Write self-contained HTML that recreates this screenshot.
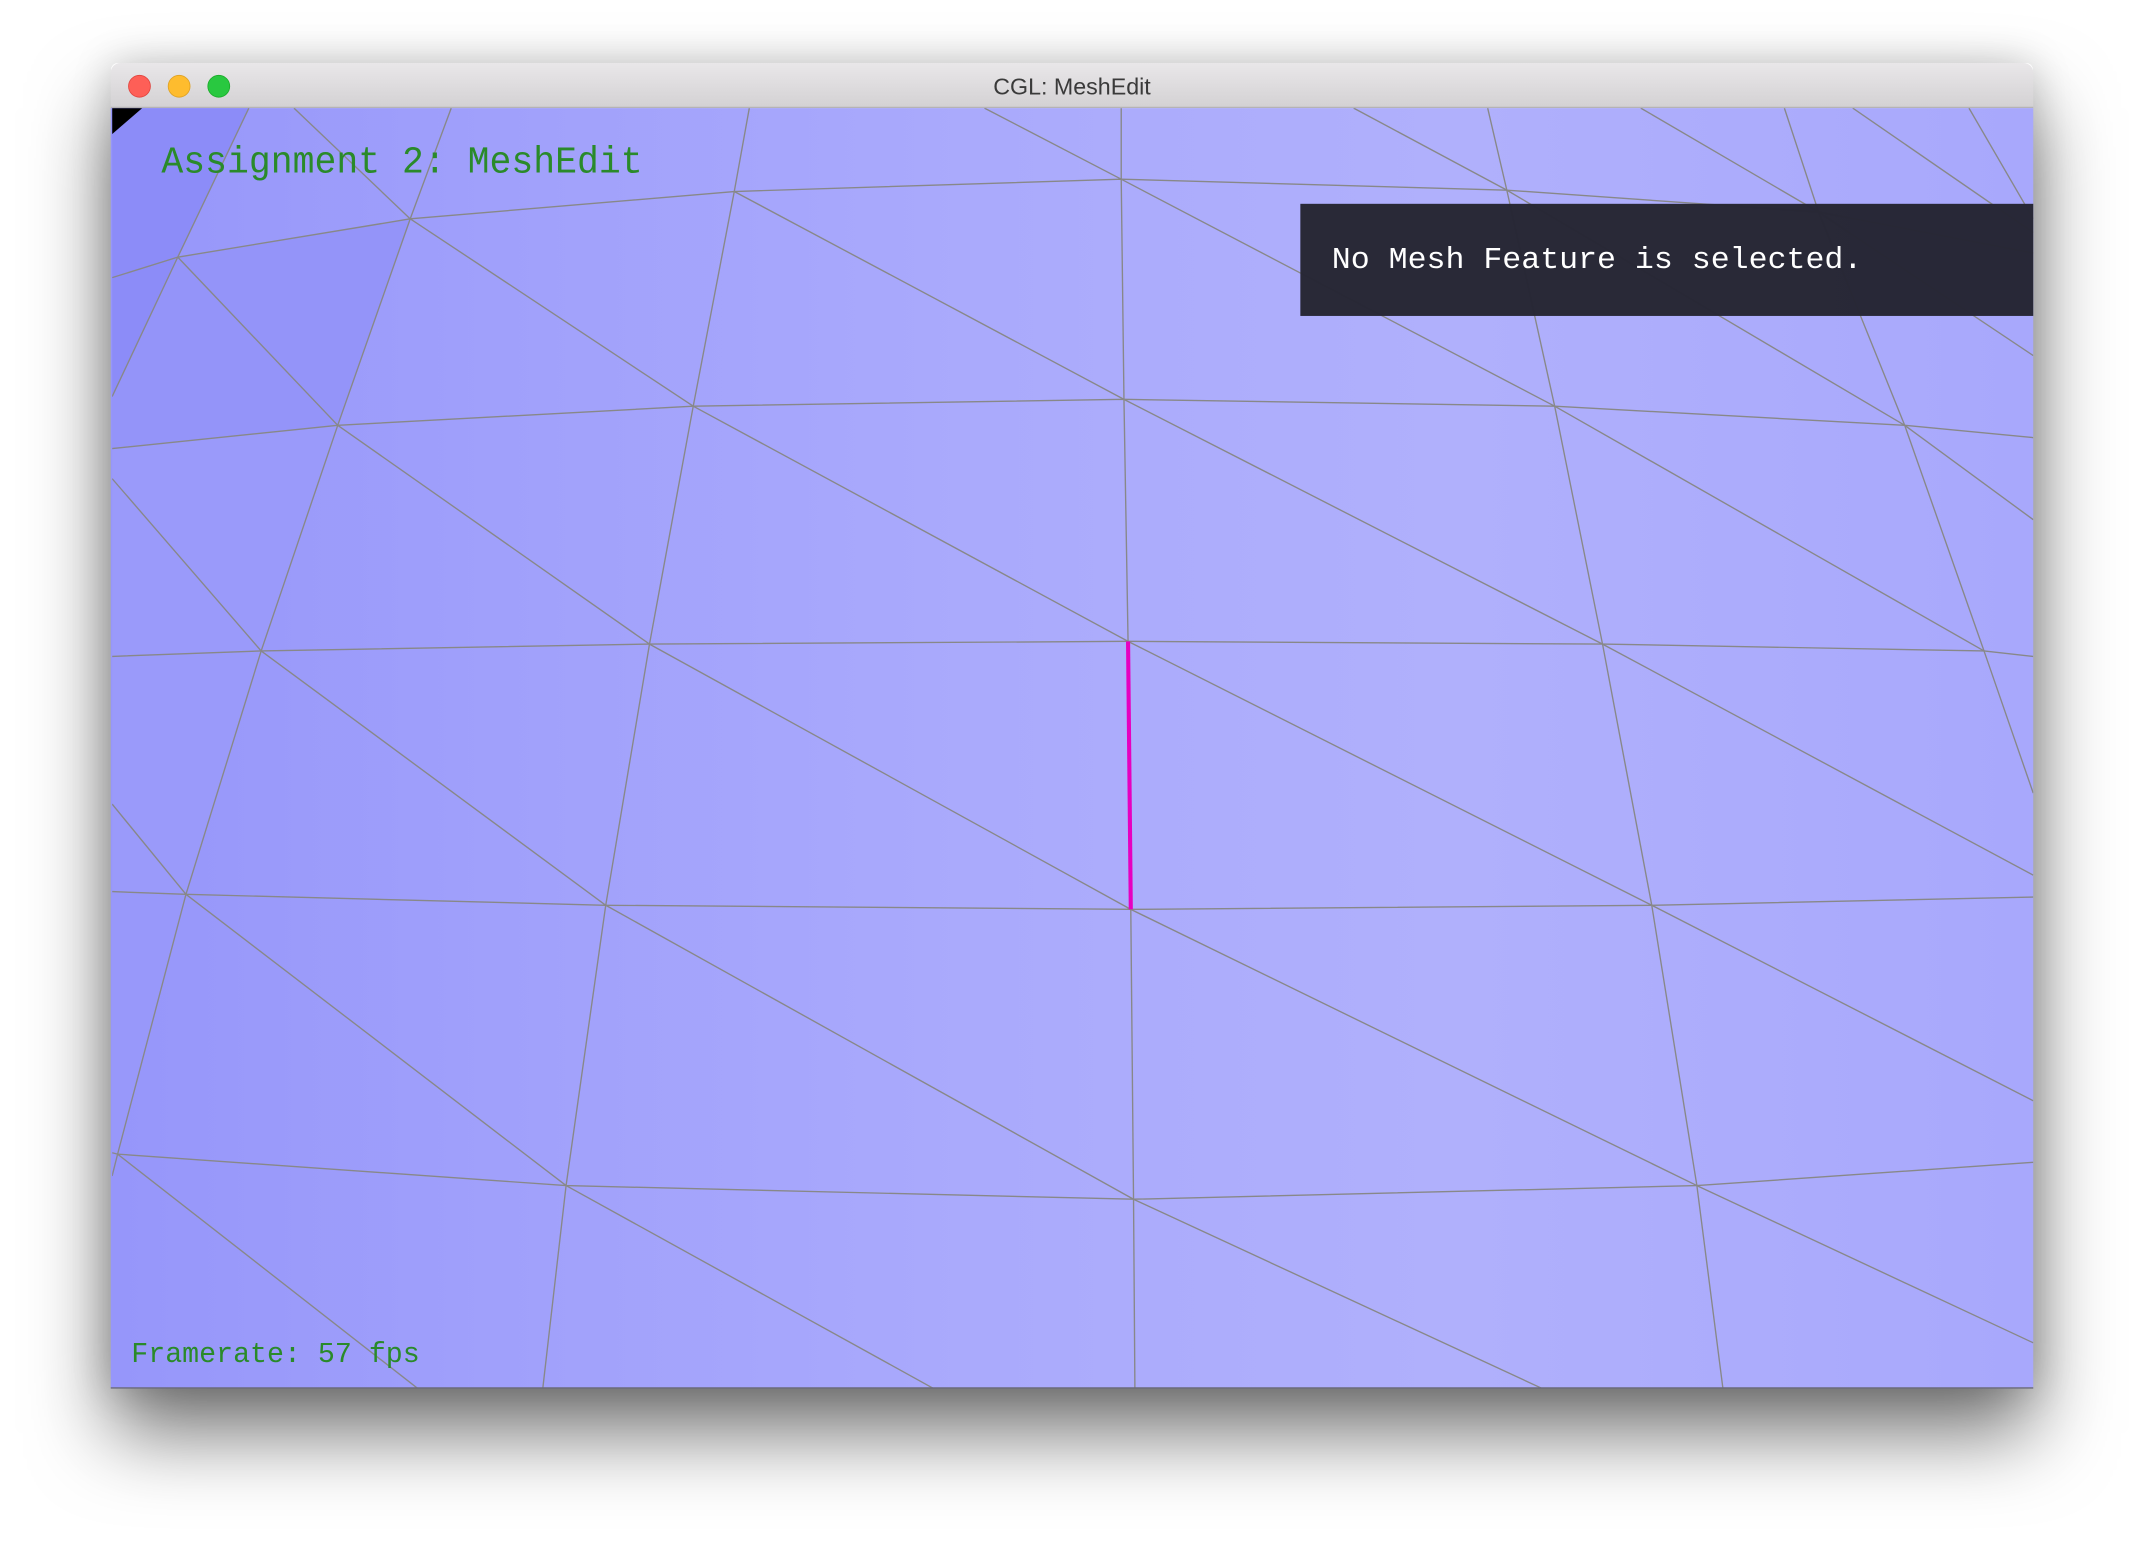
<!DOCTYPE html>
<html><head><meta charset="utf-8"><style>
html,body{margin:0;padding:0;background:#fff;width:2144px;height:1548px;overflow:hidden}
#sh{position:absolute;left:111px;top:63px;width:1922px;height:1325px;border-radius:7px;box-shadow:0 45px 80px rgba(0,0,0,0.55),0 0 40px rgba(0,0,0,0.18)}
svg{position:absolute;left:0;top:0}
</style></head><body>
<div id="sh"></div>
<svg width="2144" height="1548" viewBox="0 0 1568 1132">
<defs>
<linearGradient id="tb" x1="0" y1="0" x2="0" y2="1"><stop offset="0" stop-color="#e9e7e9"/><stop offset="1" stop-color="#d3d1d3"/></linearGradient>
<linearGradient id="bg" x1="0" y1="0" x2="1" y2="0"><stop offset="0" stop-color="#9696fa"/><stop offset="0.2" stop-color="#a0a0fb"/><stop offset="0.45" stop-color="#aaaafc"/><stop offset="0.7" stop-color="#b0b0fc"/><stop offset="1" stop-color="#a8a8fc"/></linearGradient>
<clipPath id="c"><rect x="82" y="79" width="1405" height="936"/></clipPath>
</defs>
<path d="M88 46 H1480 a7 7 0 0 1 7 7 V79 H81 V53 a7 7 0 0 1 7-7z" fill="url(#tb)"/>
<line x1="81" y1="78.5" x2="1487" y2="78.5" stroke="#b5b3b5"/>
<circle cx="102" cy="63" r="8" fill="#fe5f57" stroke="#e0443e" stroke-width="0.6"/>
<circle cx="131" cy="63" r="8" fill="#febc2e" stroke="#dea123" stroke-width="0.6"/>
<circle cx="160" cy="63" r="8" fill="#29c840" stroke="#1aab29" stroke-width="0.6"/>
<text x="784" y="69" text-anchor="middle" font-family="Liberation Sans, sans-serif" font-size="17" fill="#3a3a3a">CGL: MeshEdit</text>
<rect x="81" y="79" width="1406" height="936" fill="url(#bg)"/>
<g clip-path="url(#c)">
<polygon points="82,79 182,79 130,188 82,290" fill="#8c8cf8"/>
<polygon points="130,188 300,160 247,311 82,328 82,290" fill="#9494f9"/>
<polygon points="82,328 247,311 191,476 82,480" fill="#9a9afa"/>
<polygon points="82,480 191,476 136,654 82,652" fill="#9a9afa"/>
<polygon points="82,652 136,654 86,844 82,844" fill="#9898fa"/>
<polygon points="82,79 104,79 82,98" fill="#000"/>
<g fill="none" stroke="#888" stroke-width="1">
<polyline points="82,203 130,188 300,160 537,140 820,131 1102,139 1330,155 1487,185"/>
<polyline points="82,328 247,311 507,297 822,292 1137,297 1393,311 1487,320"/>
<polyline points="82,480 191,476 475,471 825,469 1172,471 1451,476 1487,480"/>
<polyline points="82,652 136,654 443,662 827,665 1208,662 1487,656"/>
<polyline points="82,843 86,844 414,867 829,877 1241,867 1487,850"/>
<polyline points="182,79 130,188 82,290"/>
<polyline points="330,79 300,160 247,311 191,476 136,654 86,844 82,860"/>
<polyline points="548,79 537,140 507,297 475,471 443,662 414,867 397,1015"/>
<polyline points="820,79 820,131 822,292 825,469 827,665 829,877 830,1015"/>
<polyline points="1088,79 1102,139 1137,297 1172,471 1208,662 1241,867 1260,1015"/>
<polyline points="1305,79 1330,155 1393,311 1451,476 1487,580"/>
<polyline points="1440,79 1487,160"/>
<line x1="215" y1="79" x2="300" y2="160"/>
<line x1="130" y1="188" x2="247" y2="311"/>
<line x1="300" y1="160" x2="507" y2="297"/>
<line x1="537" y1="140" x2="822" y2="292"/>
<line x1="820" y1="131" x2="1137" y2="297"/>
<line x1="1102" y1="139" x2="1393" y2="311"/>
<line x1="1330" y1="155" x2="1487" y2="260"/>
<line x1="82" y1="350" x2="191" y2="476"/>
<line x1="247" y1="311" x2="475" y2="471"/>
<line x1="507" y1="297" x2="825" y2="469"/>
<line x1="822" y1="292" x2="1172" y2="471"/>
<line x1="1137" y1="297" x2="1451" y2="476"/>
<line x1="1393" y1="311" x2="1487" y2="380"/>
<line x1="82" y1="588" x2="136" y2="654"/>
<line x1="191" y1="476" x2="443" y2="662"/>
<line x1="475" y1="471" x2="827" y2="665"/>
<line x1="825" y1="469" x2="1208" y2="662"/>
<line x1="1172" y1="471" x2="1487" y2="640"/>
<line x1="136" y1="654" x2="414" y2="867"/>
<line x1="443" y1="662" x2="829" y2="877"/>
<line x1="827" y1="665" x2="1241" y2="867"/>
<line x1="1208" y1="662" x2="1487" y2="805"/>
<line x1="86" y1="844" x2="305" y2="1015"/>
<line x1="414" y1="867" x2="682" y2="1015"/>
<line x1="829" y1="877" x2="1127" y2="1015"/>
<line x1="1241" y1="867" x2="1487" y2="982"/>
<line x1="720" y1="79" x2="820" y2="131"/>
<line x1="990" y1="79" x2="1102" y2="139"/>
<line x1="1200" y1="79" x2="1330" y2="155"/>
<line x1="1355" y1="79" x2="1487" y2="170"/>
</g>
<line x1="825" y1="469" x2="827" y2="665" stroke="#e600c0" stroke-width="3"/>
</g>
<rect x="951" y="149" width="536" height="82" fill="#262633" opacity="0.98"/>
<text x="974" y="196" font-family="Liberation Mono, monospace" font-size="22" fill="#fff" textLength="388" lengthAdjust="spacingAndGlyphs">No Mesh Feature is selected.</text>
<text x="118" y="126" font-family="Liberation Mono, monospace" font-size="28" fill="#2a8a2a" textLength="352" lengthAdjust="spacingAndGlyphs">Assignment 2: MeshEdit</text>
<text x="96" y="996" font-family="Liberation Mono, monospace" font-size="21" fill="#2a8a2a" textLength="211" lengthAdjust="spacingAndGlyphs">Framerate: 57 fps</text>
<line x1="81" y1="1015" x2="1487" y2="1015" stroke="#6a6a7a" stroke-width="1"/>
</svg>
</body></html>
